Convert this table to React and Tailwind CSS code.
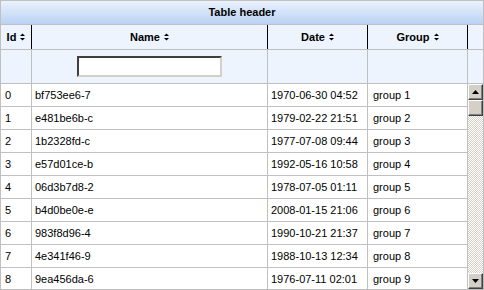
import React from "react";

const rows = [
  ["0", "bf753ee6-7", "1970-06-30 04:52", "group 1"],
  ["1", "e481be6b-c", "1979-02-22 21:51", "group 2"],
  ["2", "1b2328fd-c", "1977-07-08 09:44", "group 3"],
  ["3", "e57d01ce-b", "1992-05-16 10:58", "group 4"],
  ["4", "06d3b7d8-2", "1978-07-05 01:11", "group 5"],
  ["5", "b4d0be0e-e", "2008-01-15 21:06", "group 6"],
  ["6", "983f8d96-4", "1990-10-21 21:37", "group 7"],
  ["7", "4e341f46-9", "1988-10-13 12:34", "group 8"],
  ["8", "9ea456da-6", "1976-07-11 02:01", "group 9"],
];

const SortIcon = () => (
  <svg width="5" height="8" viewBox="0 0 5 8" className="shrink-0">
    <polygon points="0,3 2.5,0.5 5,3" fill="#000" />
    <polygon points="0,5 2.5,7.5 5,5" fill="#000" />
  </svg>
);

const HeadCell = ({ label, className }) => (
  <div
    className={`flex items-center justify-center gap-[4px] border-r border-black font-bold ${className}`}
  >
    {label}
    <SortIcon />
  </div>
);

const ScrollButton = ({ down }) => (
  <div className="h-[16px] w-[15px] shrink-0 bg-[#d4d0c8] border-t border-l border-t-white border-l-white border-b border-r border-b-[#404040] border-r-[#404040] shadow-[inset_-1px_-1px_0_#808080] flex items-center justify-center">
    <svg width="7" height="4" viewBox="0 0 7 4">
      <polygon
        points={down ? "0,0 7,0 3.5,4" : "0,4 7,4 3.5,0"}
        fill="#000"
      />
    </svg>
  </div>
);

export default function App() {
  return (
    <div className="w-[484px] h-[290px] border border-[#c0c0c0] overflow-hidden bg-white text-[11px] text-black font-['Liberation_Sans',Arial,sans-serif] flex flex-col">
      <div className="h-[24px] shrink-0 border-b border-[#c0c0c0] bg-gradient-to-b from-[#ebf2fd] to-[#b9d2f4] flex items-center justify-center font-bold">
        Table header
      </div>

      <div className="h-[25px] shrink-0 flex bg-[#edf4fe] border-b border-[#c0c0c0]">
        <HeadCell label="Id" className="w-[31px]" />
        <HeadCell label="Name" className="w-[236px]" />
        <HeadCell label="Date" className="w-[100px]" />
        <HeadCell label="Group" className="w-[100px]" />
        <div className="flex-1" />
      </div>

      <div className="h-[34px] shrink-0 flex bg-[#edf4fe] border-b border-[#c0c0c0]">
        <div className="w-[31px] border-r border-[#c0c0c0]" />
        <div className="w-[236px] border-r border-[#c0c0c0] flex items-center justify-center">
          <input
            type="text"
            className="w-[145px] h-[21px] bg-white border-2 border-t-[#404040] border-l-[#404040] border-b-[#d4d0c8] border-r-[#d4d0c8] outline-none"
          />
        </div>
        <div className="w-[100px] border-r border-[#c0c0c0]" />
        <div className="w-[100px] border-r border-[#c0c0c0]" />
        <div className="flex-1" />
      </div>

      <div className="flex-1 flex min-h-0">
        <div className="w-[467px] overflow-hidden">
          {rows.map((r) => (
            <div
              key={r[0]}
              className="h-[23px] flex border-b border-[#c0c0c0]"
            >
              <div className="w-[31px] border-r border-[#c0c0c0] pl-[4px] flex items-center">
                {r[0]}
              </div>
              <div className="w-[236px] border-r border-[#c0c0c0] pl-[3px] flex items-center">
                {r[1]}
              </div>
              <div className="w-[100px] border-r border-[#c0c0c0] pl-[3px] flex items-center">
                {r[2]}
              </div>
              <div className="w-[100px] border-r border-[#c0c0c0] pl-[5px] flex items-center">
                {r[3]}
              </div>
            </div>
          ))}
        </div>
        <div className="w-[15px] flex flex-col">
          <ScrollButton />
          <div className="h-[16px] w-[15px] shrink-0 bg-[#d4d0c8] border-t border-l border-t-white border-l-white border-b border-r border-b-[#404040] border-r-[#404040] shadow-[inset_-1px_-1px_0_#808080]" />
          <div className="flex-1 bg-[repeating-conic-gradient(#d4d0c8_0_25%,#ffffff_0_50%)] bg-[length:2px_2px]" />
          <ScrollButton down />
        </div>
      </div>
    </div>
  );
}
